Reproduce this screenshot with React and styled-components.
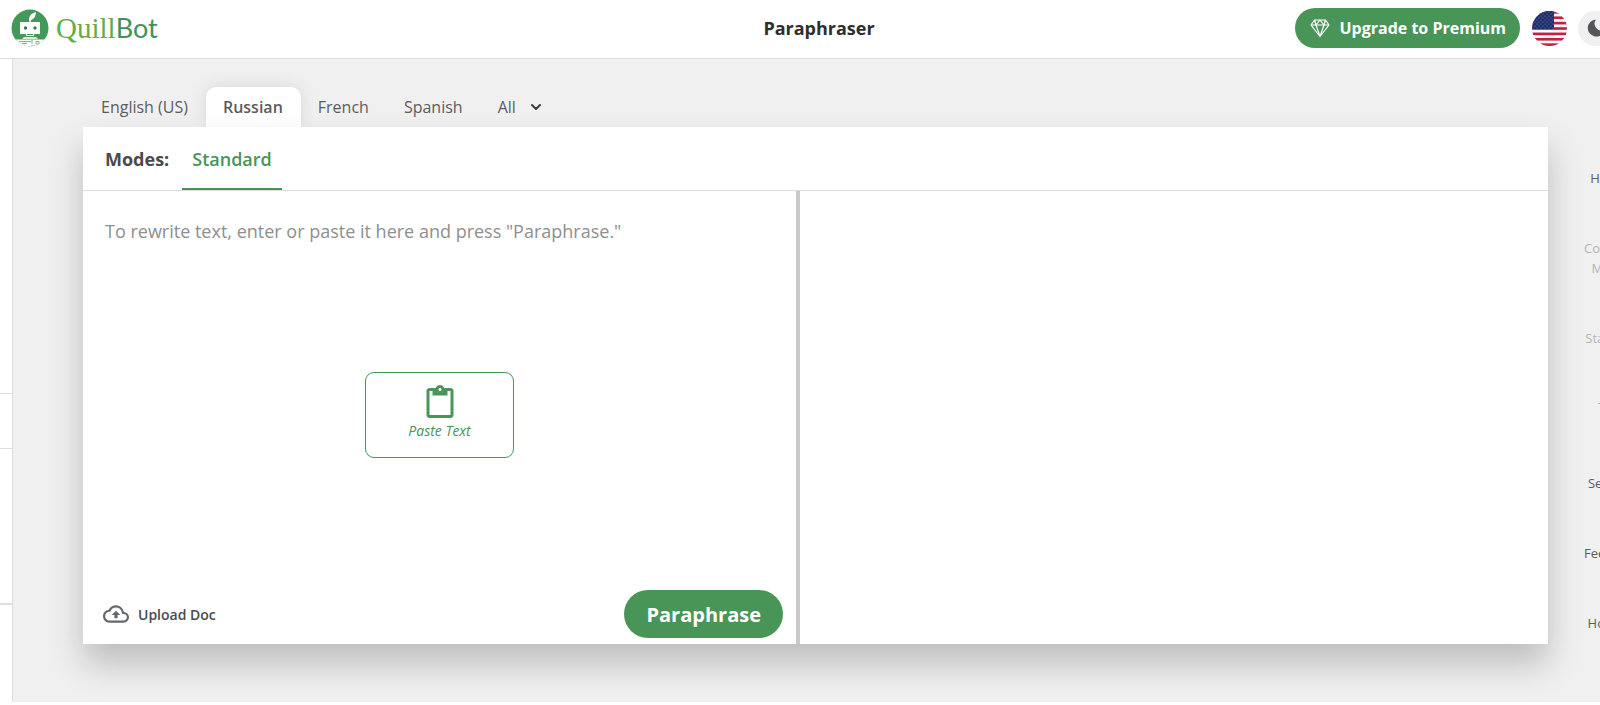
import React from "react";
import styled, { createGlobalStyle } from "styled-components";
import { MdContentPaste, MdOutlineCloudUpload } from "react-icons/md";
import { FiChevronDown } from "react-icons/fi";

const languages = ["English (US)", "Russian", "French", "Spanish"];

function App() {
  return (
    <>
      <GlobalStyle />
      <Viewport>
        <Page>
          <Header>
            <Logo href="#home">
              <BotMark />
              <LogoText>
                Quill<LogoBot>Bot</LogoBot>
              </LogoText>
            </Logo>
            <Title>Paraphraser</Title>
            <Actions>
              <UpgradeButton type="button">
                <Diamond />
                Upgrade to Premium
              </UpgradeButton>
              <RoundButton type="button" aria-label="Interface language">
                <Flag />
              </RoundButton>
              <RoundButton type="button" $filled aria-label="Dark mode">
                <Moon />
              </RoundButton>
            </Actions>
          </Header>
          <Body>
            <Sidebar>
              <SideSection $grow={336} />
              <SideSection $grow={54} />
              <SideSection $grow={155} $thick />
              <SideSection $grow={101} $last />
            </Sidebar>
            <Main>
              <Workspace>
                <Tabs>
                  {languages.map((name) => (
                    <Tab type="button" key={name} $active={name === "Russian"}>
                      {name}
                    </Tab>
                  ))}
                  <Tab type="button">
                    All
                    <FiChevronDown size={16} strokeWidth={3} />
                  </Tab>
                </Tabs>
                <Card>
                  <Modes>
                    <ModesLabel>Modes:</ModesLabel>
                    <Mode type="button">Standard</Mode>
                  </Modes>
                  <Panels>
                    <InputPanel>
                      <Editor
                        aria-label="Text to paraphrase"
                        placeholder={
                          'To rewrite text, enter or paste it here and press "Paraphrase."'
                        }
                      />
                      <PasteButton type="button">
                        <MdContentPaste size={36} />
                        <em>Paste Text</em>
                      </PasteButton>
                      <Footer>
                        <UploadButton type="button">
                          <MdOutlineCloudUpload size={26} />
                          Upload Doc
                        </UploadButton>
                        <ParaphraseButton type="button">
                          Paraphrase
                        </ParaphraseButton>
                      </Footer>
                    </InputPanel>
                    <Divider />
                    <OutputPanel />
                  </Panels>
                </Card>
              </Workspace>
              <Rail>
                <RailButton type="button">History</RailButton>
                <RailButton type="button" $muted>
                  Compare Modes
                </RailButton>
                <RailButton type="button" $muted>
                  Statistics
                </RailButton>
                <RailBreak>
                  <hr />
                </RailBreak>
                <RailButton type="button">Settings</RailButton>
                <RailButton type="button">Feedback</RailButton>
                <RailButton type="button">Hotkeys</RailButton>
              </Rail>
            </Main>
          </Body>
        </Page>
      </Viewport>
    </>
  );
}

function BotMark() {
  return (
    <svg width="38" height="38" viewBox="0 0 38 38" aria-hidden="true">
      <defs>
        <clipPath id="mark">
          <circle cx="19" cy="19" r="18.5" />
        </clipPath>
      </defs>
      <g clipPath="url(#mark)">
        <rect width="38" height="38" fill="#43995a" />
        <path
          d="M18.5 13C17 8 19.5 4.5 25 3C24.5 8 23 10 20 11L19.5 13Z"
          fill="#fff"
        />
        <path d="M9 13H29V25H23V27H15V25H9Z" fill="#fff" />
        <circle cx="14.5" cy="19" r="1.7" fill="#4a6f5a" />
        <circle cx="24" cy="19" r="1.7" fill="#4a6f5a" />
        <path d="M16 25.5H22" stroke="#43995a" strokeWidth="1" />
        <path d="M13 28H25L27 30H11Z" fill="#d9ebde" />
        <path d="M5 30.5H33V38H5Z" fill="#fff" />
        <path
          d="M8 32.5H20M21 31V35M11 34.5H16M25 32.5H28V35H25ZM20 37H24"
          stroke="#7db58c"
          fill="none"
        />
      </g>
    </svg>
  );
}

function Diamond() {
  return (
    <svg
      width="20"
      height="20"
      viewBox="0 0 20 20"
      fill="none"
      stroke="#fff"
      strokeWidth="1.2"
      strokeLinejoin="round"
      aria-hidden="true"
    >
      <path d="M4.5 2H15.5L19 7L10 18.5L1 7ZM1 7H19M4.5 2L6 7L10 18.5L14 7L15.5 2M6 7L10 2L14 7" />
    </svg>
  );
}

function Flag() {
  return (
    <svg width="35" height="35" viewBox="0 0 35 35" aria-hidden="true">
      <defs>
        <clipPath id="flag">
          <circle cx="17.5" cy="17.5" r="17.5" />
        </clipPath>
        <pattern id="stars" width="4" height="4" patternUnits="userSpaceOnUse">
          <circle cx="1" cy="1" r="0.5" fill="#8794bd" />
          <circle cx="3" cy="3" r="0.5" fill="#8794bd" />
        </pattern>
      </defs>
      <g clipPath="url(#flag)">
        <rect width="35" height="35" fill="#fff" />
        {[0, 1, 2, 3, 4, 5, 6].map((n) => (
          <rect
            key={n}
            y={(n * 70) / 13}
            width="35"
            height={35 / 13}
            fill="#c2223f"
          />
        ))}
        <rect width="22" height="18" fill="#1f2f6b" />
        <rect width="22" height="18" fill="url(#stars)" />
      </g>
    </svg>
  );
}

function Moon() {
  return (
    <svg width="18" height="18" viewBox="0 0 18 18" aria-hidden="true">
      <path
        d="M9 0.5A8.5 8.5 0 1 0 17.5 11A7 7 0 0 1 9 0.5Z"
        fill="#55565a"
      />
    </svg>
  );
}

export default App;

const GlobalStyle = createGlobalStyle`
  * {
    box-sizing: border-box;
  }

  body {
    margin: 0;
    background: #fff;
    font-family: "Open Sans", "Noto Sans", sans-serif;
    color: #4a4a4c;
  }

  button {
    margin: 0;
    padding: 0;
    border: none;
    background: none;
    color: inherit;
    font: inherit;
    cursor: pointer;
  }
`;

const Viewport = styled.div`
  overflow: hidden;
`;

/* the page runs a little past the right edge of the window */
const Page = styled.div`
  width: calc(100% + 38px);
  min-height: 100vh;
  display: flex;
  flex-direction: column;
`;

const Header = styled.header`
  display: grid;
  grid-template-columns: 1fr auto 1fr;
  align-items: center;
  height: 59px;
  padding: 0 25px 2px 11px;
  border-bottom: 1px solid #dedede;
`;

const Logo = styled.a`
  display: flex;
  align-items: center;
  gap: 7px;
  text-decoration: none;
`;

const LogoText = styled.span`
  font-family: "Liberation Serif", serif;
  font-size: 29px;
  line-height: 36px;
  color: #68ab46;
`;

const LogoBot = styled.span`
  font-family: Lato, sans-serif;
  font-size: 27px;
  color: #43915a;
`;

const Title = styled.h1`
  margin: 0 0 0 14px;
  font-size: 18px;
  font-weight: 700;
  line-height: 24px;
  color: #2e2e2e;
`;

const Actions = styled.div`
  display: flex;
  align-items: center;
  justify-content: flex-end;
  gap: 11px;
`;

const UpgradeButton = styled.button`
  display: flex;
  align-items: center;
  gap: 9px;
  height: 40px;
  margin-right: 1px;
  padding: 0 14px 0 15px;
  border-radius: 20px;
  background: #499557;
  color: #fff;
  font-size: 16px;
  font-weight: 700;
  white-space: nowrap;
`;

const RoundButton = styled.button`
  display: flex;
  align-items: center;
  justify-content: center;
  width: 35px;
  height: 35px;
  border-radius: 50%;
  background: ${({ $filled }) => ($filled ? "#f0f0f0" : "transparent")};
`;

const Body = styled.div`
  flex: 1;
  display: flex;
`;

const Sidebar = styled.aside`
  flex: none;
  display: flex;
  flex-direction: column;
  width: 12px;
`;

const SideSection = styled.div`
  flex: ${({ $grow }) => $grow} 0 0;
  border-bottom: ${({ $thick, $last }) =>
    $last ? "none" : `${$thick ? 2 : 1}px solid #dedede`};
`;

const Main = styled.main`
  flex: 1;
  display: flex;
  margin-bottom: 3px;
  border-left: 1px solid #dedede;
  background: #f0f0f0;
`;

const Workspace = styled.div`
  flex: 1;
  display: flex;
  flex-direction: column;
  padding: 28px 0 58px 70px;
`;

const Tabs = styled.nav`
  display: flex;
  height: 40px;
  padding-left: 1px;
`;

const Tab = styled.button`
  display: flex;
  align-items: center;
  gap: 12px;
  padding: 0 18px 0 17px;
  border-radius: 10px 10px 0 0;
  color: #5c5c5e;
  font-size: 16px;
  font-weight: ${({ $active }) => ($active ? 600 : 400)};
  background: ${({ $active }) => ($active ? "#fff" : "transparent")};
  box-shadow: ${({ $active }) =>
    $active ? "0 0 18px rgba(0, 0, 0, 0.1)" : "none"};

  svg {
    color: #3c3c3e;
  }
`;

const Card = styled.section`
  position: relative;
  flex: 1;
  display: flex;
  flex-direction: column;
  background: #fff;
  box-shadow: 0 20px 32px rgba(0, 0, 0, 0.21);
`;

const Modes = styled.div`
  display: flex;
  align-items: stretch;
  gap: 13px;
  height: 64px;
  padding-left: 22px;
  border-bottom: 1px solid #dedede;
  font-size: 18px;
  font-weight: 600;
`;

const ModesLabel = styled.span`
  font-weight: 700;
  line-height: 64px;
`;

const Mode = styled.button`
  padding: 2px 10px 0;
  border-bottom: 2px solid #499557;
  color: #499557;
`;

const Panels = styled.div`
  flex: 1;
  display: flex;
`;

const InputPanel = styled.div`
  flex: 713 1 0;
  display: flex;
  flex-direction: column;
  align-items: center;
`;

const Divider = styled.div`
  width: 4px;
  background: #c9c9c9;
`;

const OutputPanel = styled.div`
  flex: 748 1 0;
`;

const Editor = styled.textarea`
  flex: 154 1 0;
  width: 100%;
  padding: 27px 22px 0;
  border: none;
  outline: none;
  resize: none;
  background: transparent;
  color: #4a4a4c;
  font-family: inherit;
  font-size: 18px;
  line-height: 26px;

  &::placeholder {
    color: #8f8f8f;
    opacity: 1;
  }
`;

const PasteButton = styled.button`
  display: flex;
  flex-direction: column;
  align-items: center;
  width: 149px;
  height: 86px;
  padding-top: 12px;
  border: 1px solid #499557;
  border-radius: 9px;
  color: #499557;
  font-size: 14px;
  line-height: 20px;
`;

const Footer = styled.div`
  flex: 179 1 0;
  display: flex;
  align-items: flex-end;
  justify-content: space-between;
  width: 100%;
  padding: 0 13px 6px 20px;
`;

const UploadButton = styled.button`
  display: flex;
  align-items: center;
  gap: 9px;
  height: 48px;
  font-size: 14px;
  font-weight: 600;

  svg {
    color: #66676b;
  }
`;

const ParaphraseButton = styled.button`
  height: 48px;
  padding: 0 22px;
  border-radius: 24px;
  background: #499557;
  color: #fff;
  font-size: 20px;
  font-weight: 700;
`;

const Rail = styled.nav`
  flex: none;
  display: flex;
  flex-direction: column;
  align-items: center;
  gap: 50px;
  width: 90px;
  padding: 109px 0 0 38px;
`;

const RailButton = styled.button`
  width: 56px;
  color: ${({ $muted }) => ($muted ? "#b4b4b4" : "#5c5c5e")};
  font-size: 13px;
  line-height: 20px;
`;

const RailBreak = styled.div`
  height: 25px;

  hr {
    width: 28px;
    margin: 5px 0 0;
    border: none;
    border-top: 1px solid #b4b4b4;
  }
`;
